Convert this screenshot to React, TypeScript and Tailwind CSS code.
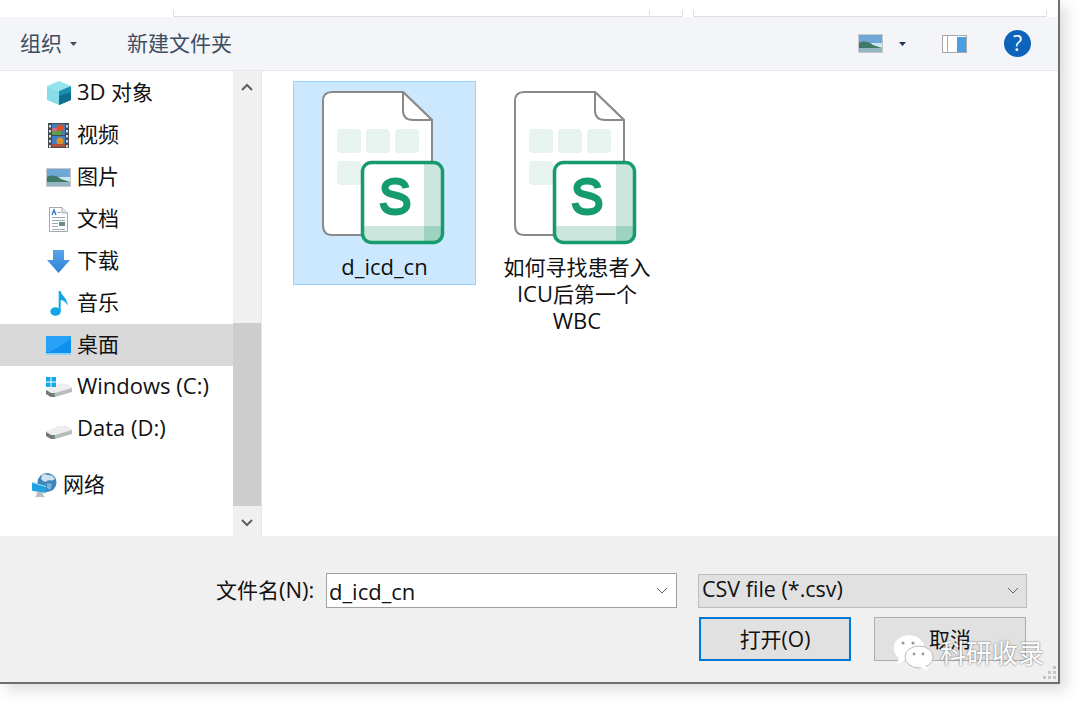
import React from 'react';

const FONT = "font-['Open_Sans','Noto_Sans_CJK_SC',sans-serif]";

// latin runs sit a bit wider than the cjk ones in the shot
function L({ children }: { children: React.ReactNode }) {
  return <span className="text-[22px]">{children}</span>;
}

function Cube() {
  return (
    <svg width="26" height="25" viewBox="0 0 26 25">
      <path d="M13 0 L25 5 L13 10 L1 5Z" fill="#93e4ef" />
      <path d="M1 5 L13 10 V24 L1 19Z" fill="#86dde8" />
      <path d="M25 5 L13 10 V24 L25 19Z" fill="#1a8fb0" />
      <path d="M13 15 L25 11 V19 L13 24Z" fill="#0f6f8f" />
    </svg>
  );
}

function Film() {
  return (
    <svg width="21" height="25" viewBox="0 0 21 25">
      <rect width="21" height="25" fill="#464a50" />
      <rect x="4" y="1" width="13" height="11" fill="#3f7fc0" />
      <rect x="4" y="13" width="13" height="11" fill="#3f7fc0" />
      <rect x="4" y="5" width="5" height="3" fill="#d06a8a" />
      <circle cx="12" cy="5" r="3.5" fill="#d8552c" />
      <rect x="4" y="8" width="9" height="4" fill="#5aa04a" />
      <circle cx="12" cy="18" r="3.5" fill="#d8952c" />
      <rect x="4" y="21" width="13" height="3" fill="#b0503a" />
      {[2, 7, 12, 17, 22].map((y) => (
        <React.Fragment key={y}>
          <rect x="1" y={y} width="2" height="2.5" fill="#d8d8d8" />
          <rect x="18" y={y} width="2" height="2.5" fill="#d8d8d8" />
        </React.Fragment>
      ))}
    </svg>
  );
}

function Landscape() {
  return (
    <svg width="25" height="19" viewBox="0 0 25 19">
      <rect width="25" height="19" fill="#c6c8ca" />
      <rect x="1" y="1" width="23" height="17" fill="#cfe4f2" />
      <rect x="1" y="1" width="23" height="8" fill="#6fa8d6" />
      <path d="M1 9 C7 6 11 8 15 11 L24 14 V18 H1Z" fill="#3f7a68" />
      <rect x="1" y="14" width="23" height="4" fill="#93b6c2" />
    </svg>
  );
}

function Doc() {
  return (
    <svg width="19" height="25" viewBox="0 0 19 25">
      <path d="M.5.5 H13 L18.5 6 V24.5 H.5Z" fill="#fff" stroke="#a4a8ac" />
      <path d="M13 .5 V6 H18.5" fill="#e4e8ec" stroke="#a4a8ac" />
      <path d="M3 8 L5 3 L7 8" fill="none" stroke="#2f7fd0" strokeWidth="1.5" />
      <rect x="8" y="5" width="4" height="1" fill="#9ab" />
      <rect x="3" y="10" width="13" height="1" fill="#9ab" />
      <rect x="3" y="13" width="13" height="1" fill="#9ab" />
      <rect x="10" y="15" width="6" height="4" fill="#6a8f80" />
      <rect x="3" y="16" width="6" height="1" fill="#9ab" />
      <rect x="3" y="19" width="6" height="1" fill="#9ab" />
      <rect x="3" y="22" width="13" height="1" fill="#9ab" />
    </svg>
  );
}

function DownArrow() {
  return (
    <svg width="23" height="23" viewBox="0 0 23 23">
      <defs>
        <linearGradient id="dl" x1="0" y1="0" x2="0" y2="1">
          <stop offset="0" stopColor="#5aa5ea" />
          <stop offset="1" stopColor="#2f80d6" />
        </linearGradient>
      </defs>
      <path d="M6 0 H17 V10 H23 L11.5 23 L0 10 H6Z" fill="url(#dl)" />
    </svg>
  );
}

function Note() {
  return (
    <svg width="18" height="25" viewBox="0 0 18 25">
      <ellipse cx="5.5" cy="20.5" rx="5.2" ry="4.3" fill="#12a5e8" />
      <path d="M8.7 0 H10.7 C11.2 5 18.2 7 17.5 15 C16.5 11 13.5 9.5 10.7 9 V20.5 H8.7Z" fill="#12a5e8" />
    </svg>
  );
}

function Desktop() {
  return (
    <svg width="25" height="19" viewBox="0 0 25 19">
      <rect width="25" height="19" rx="1" fill="#0f8ff0" />
      <path d="M0 0 H25 V3 L4 16 H0Z" fill="#28a2f6" />
      <rect y="17" width="25" height="2" fill="#8ccff6" />
    </svg>
  );
}

function Drive({ win }: { win?: boolean }) {
  return (
    <svg width="26" height="20" viewBox="0 0 26 20">
      <path d="M0 13 L14 7 H20 L26 11 V15 L9 20 H5 L0 17Z" fill="#b9bcbd" />
      <path d="M0 13 L14 7 H20 L26 11 L9 16 H5Z" fill="#eeeeee" />
      <path d="M0 13 L5 16 H9 V20 H5 L0 17Z" fill="#74787b" />
      <rect x="7" y="17" width="2" height="1.5" fill="#4ec05a" />
      {win && (
        <g fill="#15a8ea">
          <rect x="0" y="0" width="4.5" height="4.5" />
          <rect x="5.5" y="0" width="4.5" height="4.5" />
          <rect x="0" y="5.5" width="4.5" height="4.5" />
          <rect x="5.5" y="5.5" width="4.5" height="4.5" />
        </g>
      )}
    </svg>
  );
}

function Network() {
  return (
    <svg width="25" height="25" viewBox="0 0 25 25">
      <circle cx="15" cy="9.5" r="9.5" fill="#3f86bd" />
      <path d="M10 2 C13 0 17 3 20 2.5 L23 6 C19 9 17 6 15 8 C13 10 11 8 9 6Z" fill="#cfe2f0" />
      <path d="M15 10 L20 11 L18 17 L15 15Z" fill="#7fb4da" />
      <path d="M0 9 L14 13 V20 L1 18 Q0 18 0 17Z" fill="#1fa2e0" />
      <path d="M0 9 L14 13 V14 L0 10Z" fill="#a9def4" />
      <path d="M4 18 L11 19.5 V22 L13 24 H3 L5 21Z" fill="#b8bec4" />
    </svg>
  );
}

function SheetFile() {
  return (
    <svg width="124" height="156" viewBox="0 0 124 156">
      <path d="M10 1 H81 L110 29 V132 Q110 144 98 144 H10 Q1 144 1 134 V10 Q1 1 10 1Z" fill="#fff" stroke="#8a8a8a" strokeWidth="2" />
      <path d="M81 1 V19 Q81 29 91 29 H110Z" fill="#fff" stroke="#8a8a8a" strokeWidth="2" strokeLinejoin="round" />
      <g fill="#e6f3ee">
        <rect x="15" y="38" width="24" height="24" rx="4" />
        <rect x="44" y="38" width="24" height="24" rx="4" />
        <rect x="73" y="38" width="24" height="24" rx="4" />
        <rect x="15" y="70" width="24" height="24" rx="4" />
      </g>
      <rect x="39" y="70" width="83" height="83" rx="10" fill="#fff" />
      <path d="M102 71 H111 Q121 71 121 81 V142 Q121 152 111 152 H102Z" fill="#cbe7dd" />
      <path d="M41 135 H121 V142 Q121 152 111 152 H50 Q41 152 41 142Z" fill="#cbe7dd" />
      <path d="M102 135 H121 V142 Q121 152 111 152 H102Z" fill="#9dd3c0" />
      <rect x="40.5" y="71.5" width="80" height="80" rx="9" fill="none" stroke="#159b6e" strokeWidth="3.5" />
      <path d="M84 97 C83 92 79 90 73 90 C67 90 63 93 63 97 C63 102 68 103 73 104 C79 105.5 85 107 85 113 C85 118 80 121 73 121 C66 121 62 118 61 112" fill="none" stroke="#159b6e" strokeWidth="7" />
    </svg>
  );
}

const navItems = [
  { id: '3d', label: <><L>3D</L> 对象</>, icon: <Cube />, off: 'ml-0', pad: 'pb-[4px]' },
  { id: 'video', label: '视频', icon: <Film />, off: 'ml-[2px]', pad: 'pb-[2px]' },
  { id: 'pic', label: '图片', icon: <Landscape />, off: 'ml-0', pad: 'pb-[2px]' },
  { id: 'doc', label: '文档', icon: <Doc />, off: 'ml-[3px]', pad: 'pb-[2px]' },
  { id: 'dl', label: '下载', icon: <DownArrow />, off: 'ml-[1px]', pad: 'pb-[2px]' },
  { id: 'music', label: '音乐', icon: <Note />, off: 'ml-[4px]', pad: 'pb-[2px]' },
  { id: 'desk', label: '桌面', icon: <Desktop />, off: 'ml-0', pad: 'pb-[2px]', active: true },
  { id: 'c', label: <L>Windows (C:)</L>, icon: <Drive win />, off: 'ml-0', pad: 'pb-[4px]' },
  { id: 'd', label: <L>Data (D:)</L>, icon: <Drive />, off: 'ml-0', pad: 'pb-[4px]' },
];

function Chevron({ dir }: { dir: 'up' | 'down' }) {
  return (
    <svg width="12" height="8" viewBox="0 0 12 8">
      <path d={dir === 'up' ? 'M1 7 L6 2 L11 7' : 'M1 1 L6 6 L11 1'} fill="none" stroke="#606060" strokeWidth="2" />
    </svg>
  );
}

function SmallChevron() {
  return (
    <svg width="12" height="7" viewBox="0 0 12 7">
      <path d="M1 1 L6 6 L11 1" fill="none" stroke="#606060" strokeWidth="1" />
    </svg>
  );
}

function Caret({ color }: { color: string }) {
  return (
    <svg width="7" height="4" viewBox="0 0 7 4">
      <path d="M0 0 H7 L3.5 4Z" fill={color} />
    </svg>
  );
}

export default function App() {
  return (
    <div className={`${FONT} w-[1080px] h-[703px] bg-white overflow-hidden text-[21px] text-[#111] leading-none`}>
      <div className="w-[1060px] h-[684px] bg-white border-r-2 border-b-2 border-[#6e6e6e] shadow-[6px_6px_14px_rgba(0,0,0,0.14)] flex flex-col">
        {/* address bar leftovers */}
        <div className="h-[17px] flex items-end gap-[10px] pl-[173px] pr-[11px]">
          <div className="w-[510px] h-[7px] border border-t-0 border-[#dedede] flex justify-end">
            <div className="w-[33px] border-l border-[#dedede]" />
          </div>
          <div className="flex-1 h-[7px] border border-t-0 border-[#dedede]" />
        </div>

        {/* toolbar */}
        <div className="h-[54px] bg-[#f3f5f8] border-b border-[#e8e8e8] flex items-center pl-[20px] pr-[27px] text-[#3c4d63]">
          <span>组织</span>
          <span className="ml-[8px] mr-[50px]"><Caret color="#3c4d63" /></span>
          <span>新建文件夹</span>
          <div className="ml-auto flex items-center">
            <Landscape />
            <span className="ml-[16px] mr-[36px]"><Caret color="#1f3550" /></span>
            <svg width="25" height="18" viewBox="0 0 25 18">
              <rect x=".5" y=".5" width="24" height="17" fill="#fff" stroke="#a8a8a8" />
              <rect x="5" y="1" width="1" height="16" fill="#a8a8a8" />
              <rect x="15" y="2" width="9" height="15" fill="#4a9fe2" />
            </svg>
            <div className="ml-[37px] w-[27px] h-[27px] rounded-full bg-[#0b63bb] text-white text-[21px] font-medium flex items-center justify-center">?</div>
          </div>
        </div>

        {/* navigation and files */}
        <div className="flex-1 flex min-h-0">
          <div className="w-[233px] pt-px">
            {navItems.map((item) => (
              <div key={item.id} className={`h-[42px] flex items-center pl-[46px] ${item.active ? 'bg-[#d9d9d9]' : ''}`}>
                <span className="w-[31px] flex items-center"><span className={item.off}>{item.icon}</span></span>
                <span className={item.pad}>{item.label}</span>
              </div>
            ))}
            <div className="h-[42px] mt-[14px] flex items-center pl-[32px]">
              <span className="w-[31px]"><Network /></span>
              <span className="pb-[2px]">网络</span>
            </div>
          </div>

          <div className="w-[28px] bg-[#f0f0f0] flex flex-col">
            <div className="h-[32px] flex items-center justify-center"><Chevron dir="up" /></div>
            <div className="h-[220px]" />
            <div className="h-[183px] bg-[#cdcdcd]" />
            <div className="flex-1 pt-[3px] flex items-center justify-center"><Chevron dir="down" /></div>
          </div>

          <div className="flex-1 border-l border-[#e6e6e6] pl-[31px] pt-[10px] flex gap-[9px] items-start">
            <div className="w-[183px] h-[204px] bg-[#cce8ff] border border-[#99d1ff] flex flex-col items-center">
              <div className="mt-[9px] ml-[-1px]"><SheetFile /></div>
              <div className="mt-[8px]"><L>d_icd_cn</L></div>
            </div>
            <div className="w-[184px] flex flex-col items-center">
              <div className="mt-[10px] ml-[-2px]"><SheetFile /></div>
              <div className="mt-[7px] w-[150px] text-center leading-[26px]">如何寻找患者入<br /><L>ICU</L>后第一个<br /><L>WBC</L></div>
            </div>
          </div>
        </div>

        {/* footer */}
        <div className="relative h-[146px] bg-[#f0f0f0] flex flex-col">
          <div className="mt-[37px] flex items-center pl-[216px]">
            <span className="w-[110px] pb-[2px]">文件名<L>(N):</L></span>
            <div className="w-[351px] h-[35px] bg-white border border-[#a0a0a0] flex items-center pl-[2px] pr-[8px]">
              <L>d_icd_cn</L>
              <span className="ml-auto"><SmallChevron /></span>
            </div>
            <div className="ml-[21px] w-[329px] h-[34px] bg-[#e1e1e1] border border-[#bcbcbc] flex items-center pl-[3px] pr-[7px]">
              <span className="text-[21.5px] pb-[3px]">CSV file (*.csv)</span>
              <span className="ml-auto"><SmallChevron /></span>
            </div>
          </div>
          <div className="mt-[9px] flex justify-end pr-[32px] gap-[23px]">
            <div className="w-[152px] h-[44px] bg-[#e1e1e1] border-2 border-[#0078d7] flex items-center justify-center">打开(O)</div>
            <div className="w-[152px] h-[44px] bg-[#e1e1e1] border border-[#adadad] flex items-center justify-center">取消</div>
          </div>

          {/* watermark */}
          <div className="absolute left-[892px] top-[98px] flex items-center">
            <svg width="42" height="38" viewBox="0 0 42 38">
              <ellipse cx="17" cy="14" rx="16" ry="13.5" fill="#fff" stroke="#ddd" />
              <path d="M7 23 L5 31 L13 26Z" fill="#fff" />
              <ellipse cx="27" cy="23" rx="14" ry="11" fill="#fff" stroke="#bbb" />
              <path d="M33 31 L36 37 L28 33Z" fill="#fff" />
              <circle cx="11" cy="9" r="1.6" fill="#999" />
              <circle cx="21" cy="9" r="1.6" fill="#999" />
              <circle cx="22" cy="20" r="1.4" fill="#999" />
              <circle cx="31" cy="20" r="1.4" fill="#999" />
            </svg>
            <span className="text-[26px] text-white [text-shadow:0_0_2px_#555] ml-[6px]">科研收录</span>
          </div>

          {/* resize grip */}
          <svg width="16" height="16" viewBox="0 0 16 16" className="absolute right-[1px] bottom-[1px]">
            <g fill="#c6c6c6">
              <rect x="12" y="1" width="3" height="3" />
              <rect x="7" y="6" width="3" height="3" />
              <rect x="12" y="6" width="3" height="3" />
              <rect x="2" y="11" width="3" height="3" />
              <rect x="7" y="11" width="3" height="3" />
              <rect x="12" y="11" width="3" height="3" />
            </g>
          </svg>
        </div>
      </div>
    </div>
  );
}
